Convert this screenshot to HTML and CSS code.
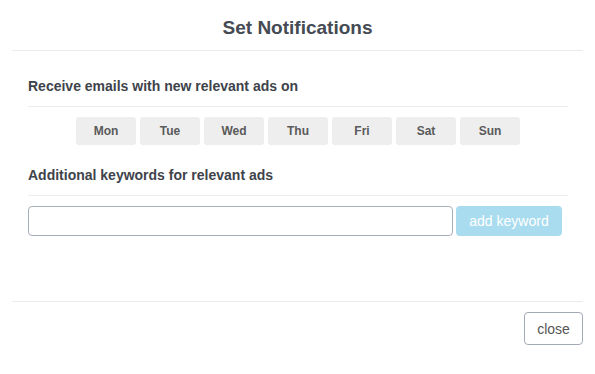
FILE: index.html
```html
<!DOCTYPE html>
<html lang="en">
<head>
    <meta charset="UTF-8">
    <meta name="viewport" content="width=device-width, initial-scale=1.0">
    <title>Set Notifications</title>
    <link rel="stylesheet" href="styles.css">
</head>
<body>
    <div class="modal">
        <div class="modal-header">
            <h2>Set Notifications</h2>
        </div>

        <div class="modal-body">
            <div class="section">
                <h4 class="section-title">Receive emails with new relevant ads on</h4>
                <div class="days">
                    <button class="day">Mon</button>
                    <button class="day">Tue</button>
                    <button class="day">Wed</button>
                    <button class="day">Thu</button>
                    <button class="day">Fri</button>
                    <button class="day">Sat</button>
                    <button class="day">Sun</button>
                </div>
            </div>

            <div class="section">
                <h4 class="section-title">Additional keywords for relevant ads</h4>
                <div class="keyword-row">
                    <input type="text" class="keyword-input">
                    <button class="btn-add" disabled>add keyword</button>
                </div>
            </div>
        </div>

        <div class="modal-footer">
            <button class="btn-close">close</button>
        </div>
    </div>
</body>
</html>
```

FILE: styles.css
```css
body {
    margin: 0;
    font-family: "Liberation Sans", Arial, sans-serif;
    background: #fff;
    color: #444a53;
}
.modal {
    padding: 0 12px;
}
.modal-header {
    height: 45px;
    padding-top: 5px;
    border-bottom: 1px solid #e9ecef;
    display: flex;
    align-items: center;
    justify-content: center;
}
.modal-header h2 {
    margin: 0;
    font-size: 19px;
    font-weight: bold;
    color: #454a53;
}
.modal-body {
    padding: 0 15px 0 16px;
    height: 250px;
}
.section-title {
    margin: 0;
    padding-top: 26px;
    height: 29px;
    line-height: 18px;
    font-size: 14px;
    font-weight: bold;
    color: #3e434b;
    border-bottom: 1px solid #e9ecef;
}
.section + .section .section-title {
    padding-top: 21px;
    height: 29px;
}
.days {
    display: flex;
    justify-content: center;
    gap: 4px;
    padding-top: 10px;
}
.day {
    width: 60px;
    height: 28px;
    border: none;
    border-radius: 3px;
    background: #eeeeee;
    color: #5a5a5a;
    font-family: inherit;
    font-size: 12px;
    font-weight: bold;
    padding: 0;
}
.keyword-row {
    display: flex;
    gap: 3px;
    padding-top: 10px;
    padding-right: 6px;
}
.keyword-input {
    flex: 1;
    height: 30px;
    box-sizing: border-box;
    border: 1px solid #a8afba;
    border-radius: 4px;
    margin: 0;
}
.btn-add {
    width: 106px;
    height: 30px;
    border: none;
    border-radius: 4px;
    background: #a9dcee;
    color: #fff;
    font-family: inherit;
    font-size: 14px;
    padding: 0;
}
.modal-footer {
    border-top: 1px solid #e9ecef;
    display: flex;
    justify-content: flex-end;
    padding-top: 10px;
}
.btn-close {
    width: 59px;
    height: 33px;
    background: #fff;
    border: 1px solid #a3aab5;
    border-radius: 4px;
    color: #555;
    font-family: inherit;
    font-size: 14px;
    padding: 0;
}
```
